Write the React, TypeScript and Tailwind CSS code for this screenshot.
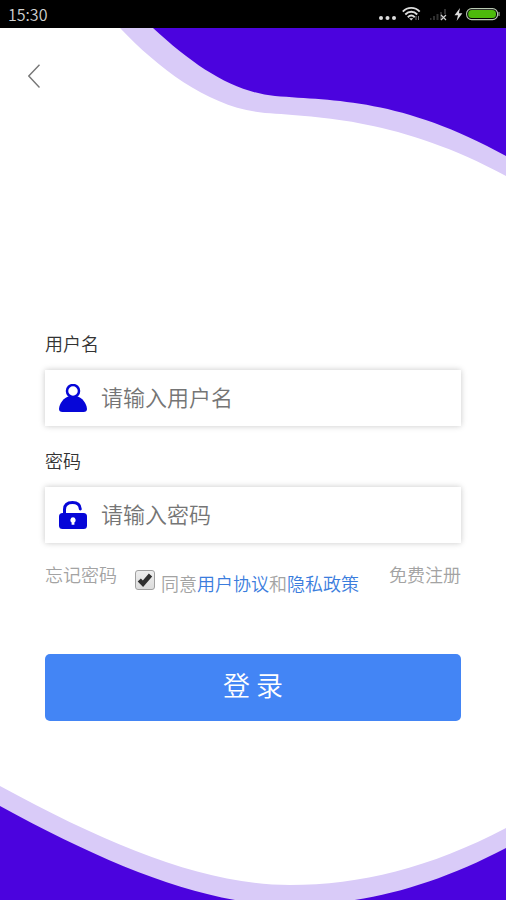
import { useState } from 'react';
import type { ReactNode } from 'react';

const StatusBar = () => (
  <header className="flex h-7 items-center justify-between bg-black pr-1.5 pl-2 text-[#d0d0d0]">
    <time className="text-base leading-7">15:30</time>
    <div className="flex items-center">
      <svg className="h-5 w-6" viewBox="0 0 24 20" fill="#dcdcdc" aria-hidden="true">
        <circle cx="3" cy="14" r="2" />
        <circle cx="9.5" cy="14" r="2" />
        <circle cx="16" cy="14" r="2" />
      </svg>
      <svg className="h-5 w-7" viewBox="0 0 28 20" fill="none" stroke="#dcdcdc" strokeWidth="1.9" aria-hidden="true">
        <path d="M0.8 7.6C5.5 2.6 13 2.6 17.7 7.6" />
        <path d="M3.3 10.5C6.8 6.9 11.8 6.9 15.2 10.5" />
        <path d="M5.8 13.2C8 11.2 10.6 11.2 12.7 13.2" />
        <path d="M7.2 14.2H11.2L9.2 16.4Z" fill="#dcdcdc" stroke="none" />
        <path d="M14 12V16M16.5 12V16" stroke="#777" strokeWidth="1" />
      </svg>
      <svg className="h-5 w-6" viewBox="0 0 24 20" fill="none" aria-hidden="true">
        <path d="M0.5 14V16M4 12V16M7.5 10V16M11 8V16M15 5V10" stroke="#303030" strokeWidth="2" />
        <path d="M11 11L16 16M16 11L11 16" stroke="#d0d0d0" strokeWidth="1.2" />
      </svg>
      <svg className="h-5 w-3" viewBox="0 0 12 20" fill="#dcdcdc" aria-hidden="true">
        <path d="M6 4L0.5 11.3H4L2.6 17L8.4 9.3H4.9Z" />
      </svg>
      <svg className="h-5 w-[34px]" viewBox="0 0 34 20" aria-hidden="true">
        <rect x="0.6" y="4.6" width="31" height="11" rx="5" fill="none" stroke="#b9c9b2" strokeWidth="1.1" />
        <rect x="2.2" y="6.1" width="27.8" height="8" rx="3.6" fill="#4dba0b" />
        <path d="M33 8V12" stroke="#b9c9b2" strokeWidth="1" />
      </svg>
    </div>
  </header>
);

const TopWave = () => (
  <svg className="col-start-1 row-start-1 w-full self-start" viewBox="0 0 506 150" aria-hidden="true">
    <path d="M120 0C161 43 211 80 265 85C320 89 401 91 506 148V0Z" fill="#d9cbf8" />
    <path d="M153 0C195 39 234 64 275 68C335 73 401 70 506 128V0Z" fill="#4b03de" />
  </svg>
);

const BottomWave = () => (
  <svg className="col-start-1 row-start-1 w-full self-end" viewBox="0 0 506 114" aria-hidden="true">
    <path d="M0 0C110 60 205 99 290 99C360 99 430 82 506 42V114H0Z" fill="#d9cbf8" />
    <path d="M0 20C110 80 205 119 290 119C360 119 430 102 506 62V114H0Z" fill="#4b03de" />
  </svg>
);

const UserIcon = () => (
  <svg className="h-7 w-7 shrink-0" viewBox="0 0 28 28" aria-hidden="true">
    <path
      d="M0 25C0.4 19 5 13.8 10 12.3H18C23 13.8 27.6 19 28 25C28 27 26.8 28 24.5 28H3.5C1.2 28 0 27 0 25Z"
      fill="#0606d8"
    />
    <circle cx="14" cy="7" r="6" fill="#fff" stroke="#0606d8" strokeWidth="2.5" />
  </svg>
);

const LockIcon = () => (
  <svg className="h-7 w-7 shrink-0" viewBox="0 0 28 28" aria-hidden="true">
    <path
      d="M5.5 13V8.5C5.5 3.5 9 1.5 13.5 1.5C18 1.5 21 3.5 21.3 8"
      fill="none"
      stroke="#0606d8"
      strokeWidth="3"
      strokeLinecap="round"
    />
    <rect y="12" width="28" height="16" rx="3.5" fill="#0606d8" />
    <path d="M14 16.3A2.9 2.9 0 0 1 15.4 21.6V23.8H12.6V21.6A2.9 2.9 0 0 1 14 16.3Z" fill="#fff" />
  </svg>
);

interface FieldProps {
  id: string;
  label: string;
  type: string;
  placeholder: string;
  icon: ReactNode;
}

const Field = ({ id, label, type, placeholder, icon }: FieldProps) => (
  <div>
    <label htmlFor={id} className="block text-lg leading-6 text-[#333]">
      {label}
    </label>
    <div className="mt-[15px] flex h-14 items-center gap-3.5 bg-white px-3.5 shadow-[0_0_6px_rgba(0,0,0,0.22)]">
      {icon}
      <input
        id={id}
        type={type}
        placeholder={placeholder}
        className="h-full min-w-0 flex-1 bg-transparent pb-1 text-[22px] text-[#333] outline-none placeholder:text-[#757575]"
      />
    </div>
  </div>
);

export default function App() {
  const [agreed, setAgreed] = useState(true);

  return (
    <div className="flex min-h-screen flex-col bg-white font-['Noto_Sans_CJK_SC',sans-serif] font-[350]">
      <StatusBar />
      <main className="grid flex-1 grid-cols-1">
        <TopWave />
        <BottomWave />
        <div className="z-10 col-start-1 row-start-1 flex flex-col">
          <button type="button" aria-label="返回" className="mt-9 ml-7 w-3">
            <svg className="h-6 w-3" viewBox="0 0 12 24" fill="none" stroke="#777" strokeWidth="1.4" aria-hidden="true">
              <path d="M11.5 0.8L0.8 12L11.5 23.4" />
            </svg>
          </button>

          <form className="mt-[243px] px-[45px] pb-40" onSubmit={(e) => e.preventDefault()}>
            <div className="grid gap-[22px]">
              <Field id="username" label="用户名" type="text" placeholder="请输入用户名" icon={<UserIcon />} />
              <Field id="password" label="密码" type="password" placeholder="请输入密码" icon={<LockIcon />} />
            </div>

            <div className="mt-[19px] flex items-start justify-between text-lg leading-6 text-[#a3a3a3]">
              <a href="#forgot">忘记密码</a>
              <div className="flex items-center gap-1.5 pt-2">
                <span className="mb-1.5 grid h-5 w-5">
                  <input
                    id="agree"
                    type="checkbox"
                    checked={agreed}
                    onChange={(e) => setAgreed(e.target.checked)}
                    className="col-start-1 row-start-1 h-5 w-5 appearance-none rounded-[3px] border border-[#a0a0a0] bg-linear-to-b from-[#eee] to-[#dcdcdc]"
                  />
                  {agreed && (
                    <svg className="pointer-events-none col-start-1 row-start-1 h-5 w-5" viewBox="0 0 20 20" aria-hidden="true">
                      <path d="M4.3 10L8 13.8L15.5 5" fill="none" stroke="#303030" strokeWidth="4.4" />
                    </svg>
                  )}
                </span>
                <p>
                  <label htmlFor="agree">同意</label>
                  <a href="#terms" className="text-[#3b7ddd]">用户协议</a>和
                  <a href="#privacy" className="text-[#3b7ddd]">隐私政策</a>
                </p>
              </div>
              <a href="#register" className="ml-3">免费注册</a>
            </div>

            <button type="submit" className="mt-[58px] h-[67px] w-full rounded-[5px] bg-[#4385f5] pb-1 text-[27px] text-white">
              登 录
            </button>
          </form>
        </div>
      </main>
    </div>
  );
}
